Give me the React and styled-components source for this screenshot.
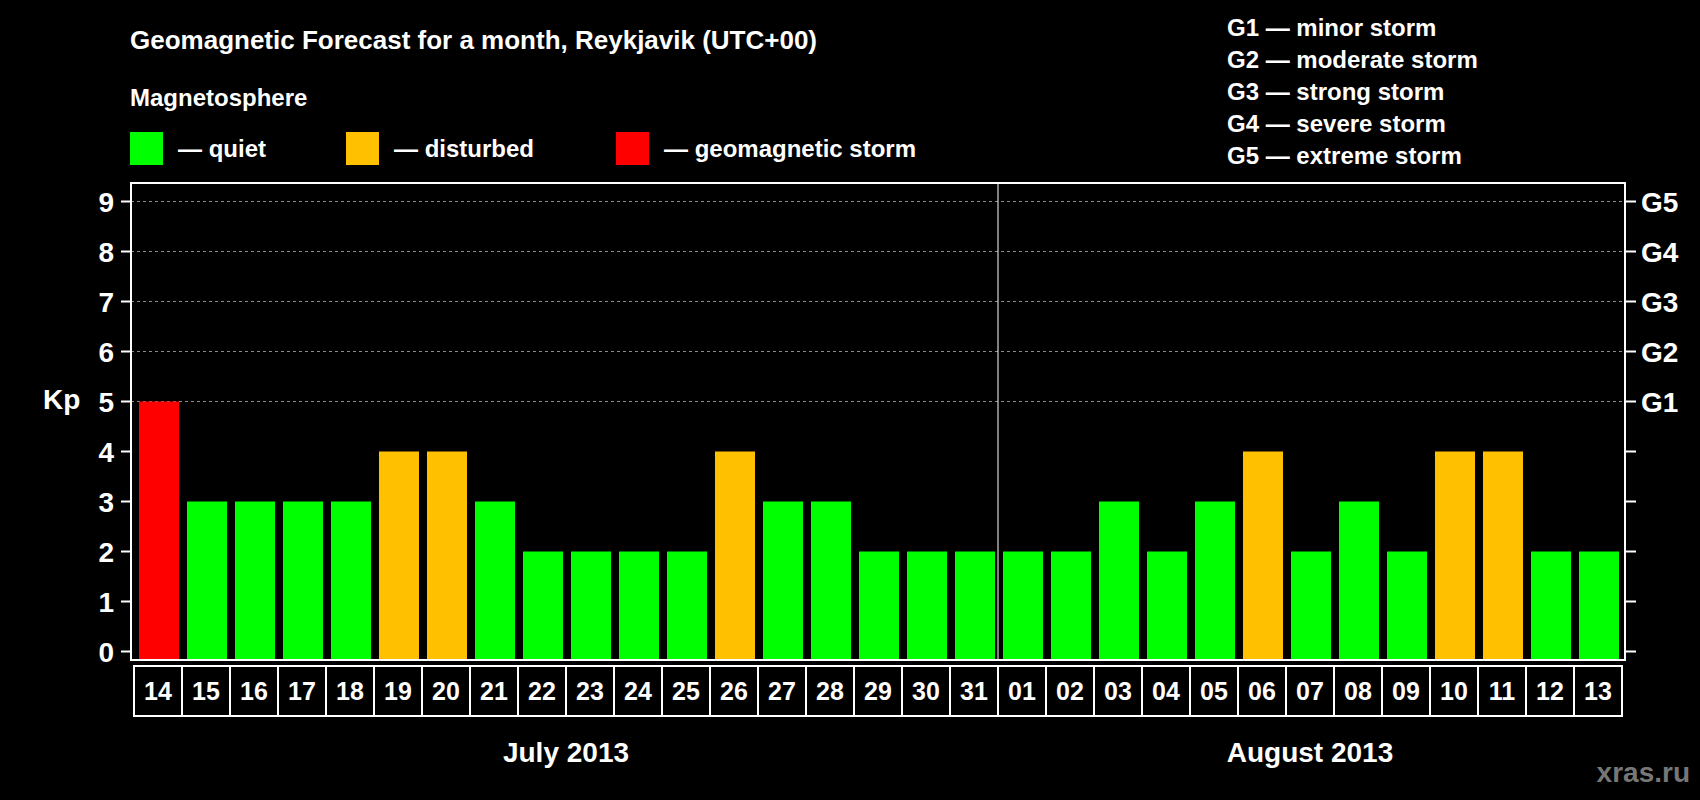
import React from 'react';
import styled, { createGlobalStyle } from 'styled-components';

const GlobalStyle = createGlobalStyle`
  body {
    margin: 0;
    background: #000;
    font-family: "Liberation Sans", Arial, sans-serif;
    color: #fff;
  }
`;

const days = [
  ['14', 5], ['15', 3], ['16', 3], ['17', 3], ['18', 3], ['19', 4], ['20', 4], ['21', 3],
  ['22', 2], ['23', 2], ['24', 2], ['25', 2], ['26', 4], ['27', 3], ['28', 3], ['29', 2],
  ['30', 2], ['31', 2], ['01', 2], ['02', 2], ['03', 3], ['04', 2], ['05', 3], ['06', 4],
  ['07', 2], ['08', 3], ['09', 2], ['10', 4], ['11', 4], ['12', 2], ['13', 2],
];

const colorFor = (v) => (v >= 5 ? '#ff0000' : v === 4 ? '#ffc000' : '#00ff00');

const storms = [
  ['G1', 'minor storm'],
  ['G2', 'moderate storm'],
  ['G3', 'strong storm'],
  ['G4', 'severe storm'],
  ['G5', 'extreme storm'],
];

// chart y offset: svg starts at page y = 170
const OFF = 170;
const yOf = (k) => 651.5 - 50 * k - OFF;

const App = () => {
  return (
    <Page>
      <GlobalStyle />
      <Header>
        <LeftHead>
          <Title>Geomagnetic Forecast for a month, Reykjavik (UTC+00)</Title>
          <Subtitle>Magnetosphere</Subtitle>
          <Legend>
            <LegendItem $w={216}><Swatch $c="#00ff00" />— quiet</LegendItem>
            <LegendItem $w={270}><Swatch $c="#ffc000" />— disturbed</LegendItem>
            <LegendItem><Swatch $c="#ff0000" />— geomagnetic storm</LegendItem>
          </Legend>
        </LeftHead>
        <StormList>
          {storms.map(([g, t]) => (
            <StormRow key={g}>{g} — {t}</StormRow>
          ))}
        </StormList>
      </Header>
      <Chart width="1700" height="630" viewBox="0 0 1700 630">
        {[5, 6, 7, 8, 9].map((k) => (
          <line key={'g' + k} x1="131" x2="1625" y1={yOf(k)} y2={yOf(k)}
            stroke="#8a8a8a" strokeWidth="1" strokeDasharray="3 3" />
        ))}
        <line x1="998" x2="998" y1={183 - OFF} y2={660 - OFF} stroke="#fff" strokeWidth="1" />
        {days.map(([d, v], i) => (
          <rect key={'b' + i} x={139 + 48 * i} width="40" y={yOf(v)}
            height={660 - OFF - yOf(v)} fill={colorFor(v)} />
        ))}
        <rect x="131" y={183 - OFF} width="1494" height="477" fill="none" stroke="#fff" strokeWidth="2" />
        {[0, 1, 2, 3, 4, 5, 6, 7, 8, 9].map((k) => (
          <g key={'t' + k}>
            <line x1="121" x2="131" y1={yOf(k)} y2={yOf(k)} stroke="#fff" strokeWidth="2" />
            <line x1="1625" x2="1636" y1={yOf(k)} y2={yOf(k)} stroke="#fff" strokeWidth="2" />
            <AxisText x="114" y={yOf(k) + 10} textAnchor="end">{k}</AxisText>
          </g>
        ))}
        {storms.map(([g], i) => (
          <AxisText key={g} x="1641" y={yOf(5 + i) + 10}>{g}</AxisText>
        ))}
        <AxisText x="43" y={399 - OFF + 10}>Kp</AxisText>
        {days.map(([d], i) => (
          <g key={'d' + i}>
            <rect x={134 + 48 * i} y={666 - OFF} width="48" height="50" fill="none" stroke="#fff" strokeWidth="2" />
            <DayText x={158 + 48 * i} y={700 - OFF} textAnchor="middle">{d}</DayText>
          </g>
        ))}
        <AxisText x="566" y={762 - OFF} textAnchor="middle">July 2013</AxisText>
        <AxisText x="1310" y={762 - OFF} textAnchor="middle">August 2013</AxisText>
        <Mark x="1690" y={782 - OFF} textAnchor="end">xras.ru</Mark>
      </Chart>
    </Page>
  );
};

const Page = styled.div`
  width: 1700px;
  height: 800px;
  background: #000;
  overflow: hidden;
`;

const Header = styled.div`
  display: flex;
  height: 170px;
  padding-left: 130px;
  box-sizing: border-box;
`;

const LeftHead = styled.div`
  width: 1097px;
  display: flex;
  flex-direction: column;
  padding-top: 24px;
`;

const Title = styled.div`
  font-size: 26px;
  font-weight: bold;
  line-height: 32px;
`;

const Subtitle = styled.div`
  margin-top: 28px;
  font-size: 24px;
  font-weight: bold;
  line-height: 28px;
`;

const Legend = styled.div`
  display: flex;
  margin-top: 20px;
`;

const LegendItem = styled.div`
  display: flex;
  align-items: center;
  width: ${(p) => (p.$w ? `${p.$w}px` : 'auto')};
  font-size: 24px;
  font-weight: bold;
  gap: 15px;
`;

const Swatch = styled.span`
  width: 33px;
  height: 33px;
  background: ${(p) => p.$c};
`;

const StormList = styled.div`
  display: flex;
  flex-direction: column;
  padding-top: 12px;
`;

const StormRow = styled.div`
  font-size: 24px;
  font-weight: bold;
  line-height: 32px;
`;

const Chart = styled.svg`
  display: block;
  font-family: "Liberation Sans", Arial, sans-serif;
`;

const AxisText = styled.text`
  fill: #fff;
  font-size: 28px;
  font-weight: bold;
`;

const DayText = styled.text`
  fill: #fff;
  font-size: 25px;
  font-weight: bold;
`;

const Mark = styled.text`
  fill: #777;
  font-size: 28px;
  font-weight: bold;
`;

export default App;
